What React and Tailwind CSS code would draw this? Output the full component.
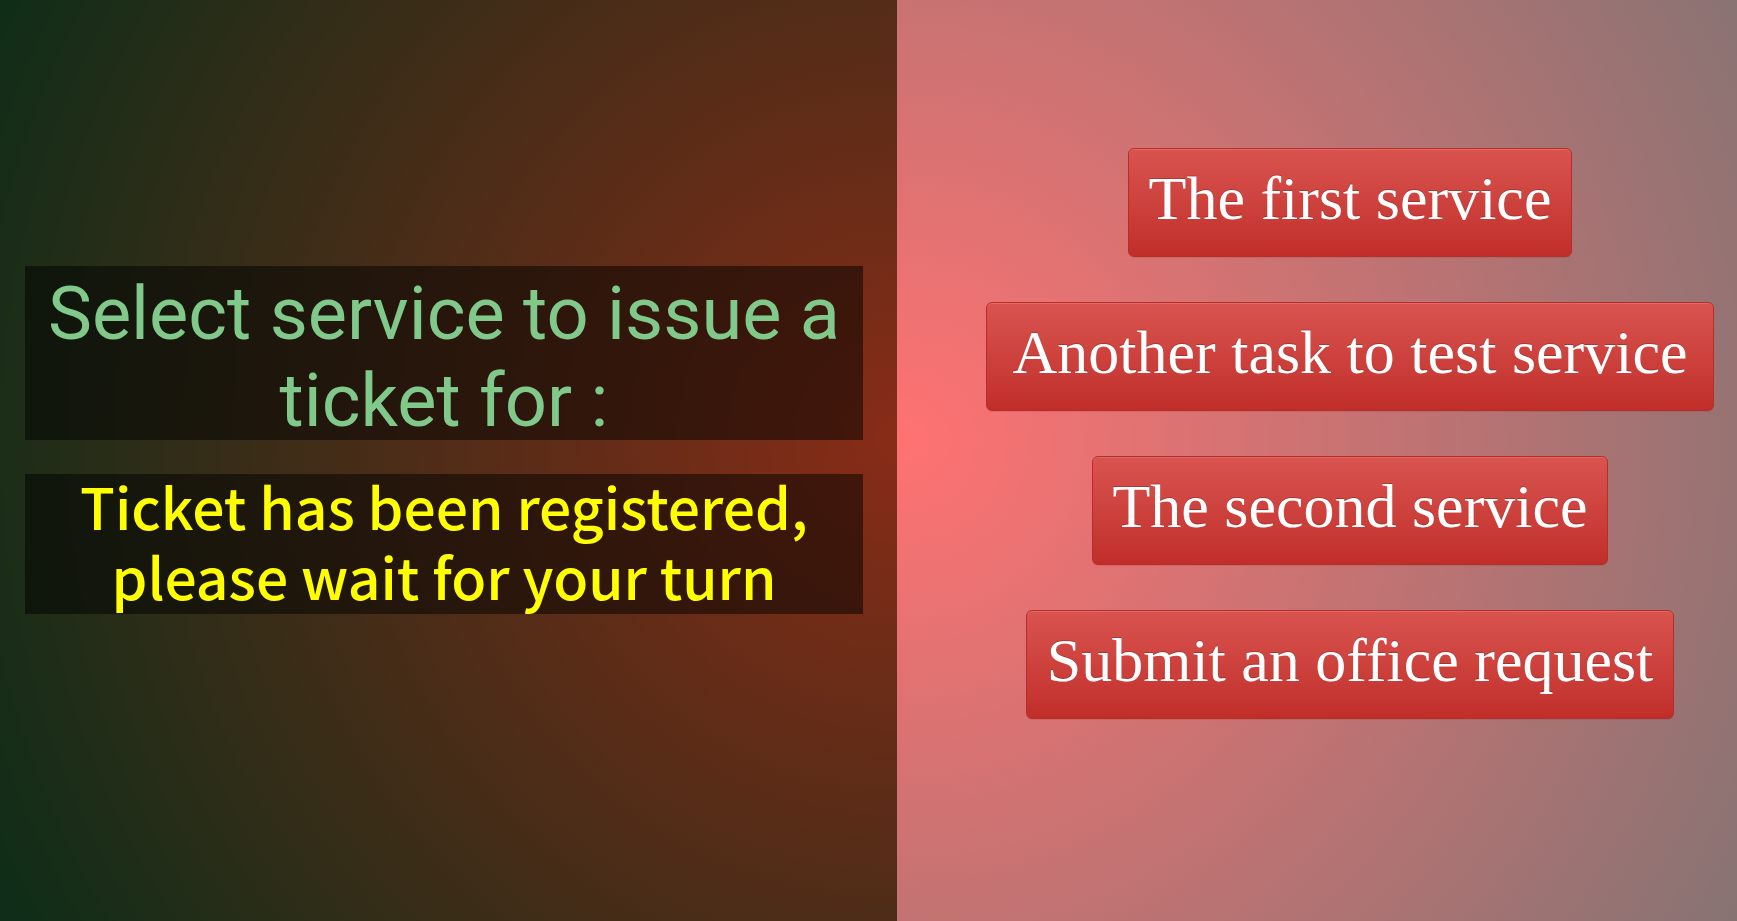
const services = [
  { name: 'The first service', width: 'min-w-[444px]' },
  { name: 'Another task to test service', width: 'min-w-[728px]' },
  { name: 'The second service', width: 'min-w-[516px]' },
  { name: 'Submit an office request', width: 'min-w-[648px]' },
];

function ServiceButton({ name, width }) {
  return (
    <button
      type="button"
      className={`${width} rounded-md border border-[#b92c28] bg-linear-to-b from-[#d9534f] to-[#c12e2a] px-4 pt-2 pb-4 font-['Liberation_Serif',serif] text-[62px] leading-[83px] text-white shadow-[inset_0_1px_0_rgba(255,255,255,0.15),0_1px_1px_rgba(0,0,0,0.075)] [text-shadow:0_-1px_0_rgba(0,0,0,0.2)]`}
    >
      {name}
    </button>
  );
}

export default function App() {
  return (
    <main className="grid min-h-screen grid-cols-[897fr_840fr]">
      <section className="flex flex-col justify-center gap-[34px] bg-[radial-gradient(circle_1000px_at_100%_440px,#882c17,#0f2d18)] pr-[34px] pb-[41px] pl-[25px] text-center">
        <h1 className="flow-root bg-black/50 px-4 font-[Roboto,sans-serif] text-[74px] leading-[87px] text-[#80c98a]">
          <span className="-mb-1 block pt-1">Select service to issue a ticket for :</span>
        </h1>
        <p className="flow-root bg-black/50 px-4 font-['Noto_Sans_CJK_SC',sans-serif] text-[57px] leading-[70px] font-medium text-[#ffff00]">
          <span className="-mt-1 block pb-1">
            Ticket has been registered, please wait for your turn
          </span>
        </p>
      </section>
      <section className="flex flex-col items-center justify-center gap-[45px] bg-[radial-gradient(circle_960px_at_10px_440px,#ff7272,#877373)] pr-[23px] pb-[54px] pl-[89px]">
        {services.map((service) => (
          <ServiceButton key={service.name} {...service} />
        ))}
      </section>
    </main>
  );
}
